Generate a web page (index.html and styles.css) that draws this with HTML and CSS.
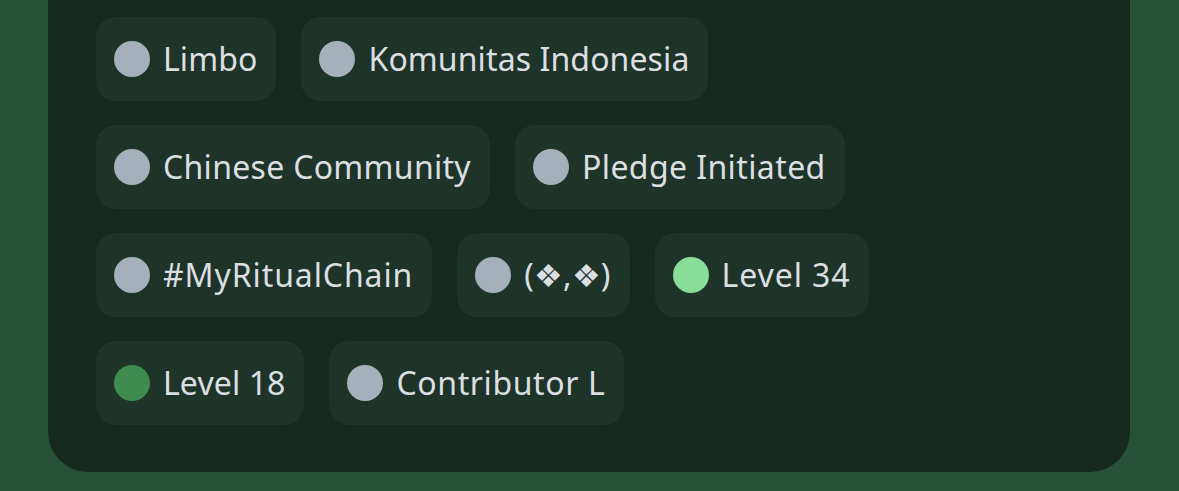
FILE: index.html
```html
<!DOCTYPE html>
<html lang="en">
<head>
<meta charset="utf-8">
<link rel="stylesheet" href="styles.css">
</head>
<body>
<div class="page">
  <div class="card">
    <div class="row">
      <div class="pill"><span class="dot"></span><span class="label">Limbo</span></div>
      <div class="pill"><span class="dot"></span><span class="label">Komunitas Indonesia</span></div>
    </div>
    <div class="row">
      <div class="pill"><span class="dot"></span><span class="label wide-1">Chinese Community</span></div>
      <div class="pill"><span class="dot"></span><span class="label wide-2">Pledge Initiated</span></div>
    </div>
    <div class="row">
      <div class="pill"><span class="dot"></span><span class="label wide-4">#MyRitualChain</span></div>
      <div class="pill"><span class="dot"></span><span class="label">(❖,❖)</span></div>
      <div class="pill"><span class="dot dot-light"></span><span class="label wide-4">Level 34</span></div>
    </div>
    <div class="row">
      <div class="pill"><span class="dot dot-dark"></span><span class="label">Level 18</span></div>
      <div class="pill"><span class="dot"></span><span class="label wide-3">Contributor L</span></div>
    </div>
  </div>
</div>
</body>
</html>
```
FILE: styles.css
```css
html, body {
  margin: 0;
  padding: 0;
  background: #285139;
}
.page {
  width: 1179px;
  height: 491px;
  box-sizing: border-box;
  padding: 0 49px 19px 48px;
  background: #285139;
}
.card {
  background: #15291f;
  border-radius: 0 0 40px 40px;
  padding: 17px 48px 47px;
  display: flex;
  flex-direction: column;
  gap: 24px;
}
.row {
  display: flex;
  gap: 25px;
}
.pill {
  height: 84px;
  box-sizing: border-box;
  padding: 0 19px 0 18px;
  background: #1f3429;
  border-radius: 20px;
  display: flex;
  align-items: center;
  gap: 13px;
}
.dot {
  width: 36px;
  height: 36px;
  border-radius: 50%;
  background: #a6b0ba;
  flex: none;
}
.dot-light { background: #88dd98; }
.dot-dark { background: #3e8c50; }
.label {
  font-family: "Noto Sans", sans-serif;
  font-size: 32px;
  letter-spacing: 0.1px;
  color: #dbdfe2;
  white-space: nowrap;
  line-height: 1;
}
.wide-1 { letter-spacing: 0.3px; }
.wide-2 { letter-spacing: 0.4px; }
.wide-3 { letter-spacing: 0.6px; }
.wide-4 { letter-spacing: 0.9px; }
```
